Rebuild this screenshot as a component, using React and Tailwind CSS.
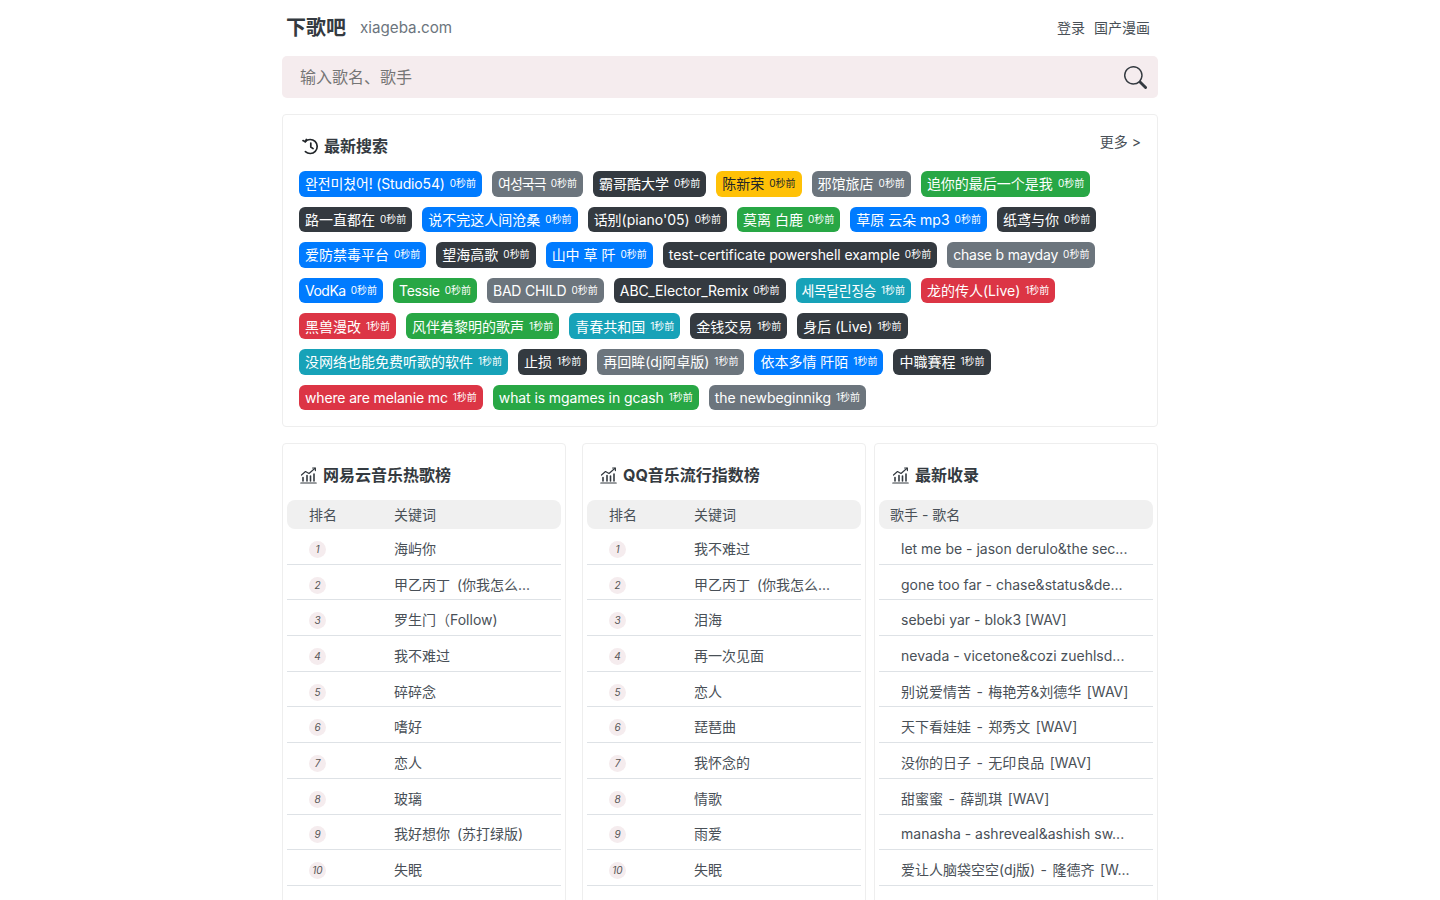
import React from "react";
import { BsSearch } from "react-icons/bs";

const colors = {
  blue: "bg-[#007bff] text-white",
  gray: "bg-[#6c757d] text-white",
  dark: "bg-[#343a40] text-white",
  yellow: "bg-[#ffc107] text-[#212529]",
  green: "bg-[#28a745] text-white",
  cyan: "bg-[#17a2b8] text-white",
  red: "bg-[#dc3545] text-white",
};

// label, colour, seconds, optional tracking tweak so widths line up
const tags = [
  ["완전미쳤어! (Studio54)", "blue", 0, "tracking-[-0.15px]"],
  ["여성국극", "gray", 0, "tracking-[-1px]"],
  ["霸哥酷大学", "dark", 0],
  ["陈新荣", "yellow", 0],
  ["邪馆旅店", "gray", 0],
  ["追你的最后一个是我", "green", 0],
  ["路一直都在", "dark", 0],
  ["说不完这人间沧桑", "blue", 0],
  ["话别(piano'05)", "dark", 0],
  ["莫离 白鹿", "green", 0],
  ["草原 云朵 mp3", "blue", 0],
  ["纸鸢与你", "dark", 0],
  ["爱防禁毒平台", "blue", 0],
  ["望海高歌", "dark", 0],
  ["山中 草 阡", "blue", 0],
  ["test-certificate powershell example", "dark", 0, "tracking-[-0.06px]"],
  ["chase b mayday", "gray", 0, "tracking-[-0.2px]"],
  ["VodKa", "blue", 0, "tracking-[-0.5px]"],
  ["Tessie", "green", 0, "tracking-[-0.3px]"],
  ["BAD CHILD", "gray", 0, "tracking-[-0.2px]"],
  ["ABC_Elector_Remix", "dark", 0],
  ["세목달린징승", "cyan", 1, "tracking-[-0.5px]"],
  ["龙的传人(Live)", "red", 1],
  ["黑兽漫改", "red", 1],
  ["风伴着黎明的歌声", "green", 1],
  ["青春共和国", "cyan", 1],
  ["金钱交易", "dark", 1],
  ["身后 (Live)", "dark", 1],
  ["没网络也能免费听歌的软件", "cyan", 1],
  ["止损", "dark", 1],
  ["再回眸(dj阿卓版)", "gray", 1],
  ["依本多情 阡陌", "blue", 1],
  ["中職賽程", "dark", 1],
  ["where are melanie mc", "red", 1, "tracking-[-0.15px]"],
  ["what is mgames in gcash", "green", 1, "tracking-[-0.1px]"],
  ["the newbeginnikg", "gray", 1, "tracking-[-0.06px]"],
];

const netease = ["海屿你", "甲乙丙丁 (你我怎么...", "罗生门（Follow)", "我不难过", "碎碎念", "嗜好", "恋人", "玻璃", "我好想你 (苏打绿版)", "失眠"];
const qq = ["我不难过", "甲乙丙丁 (你我怎么...", "泪海", "再一次见面", "恋人", "琵琶曲", "我怀念的", "情歌", "雨爱", "失眠"];
const latest = [
  "let me be - jason derulo&the sec...",
  "gone too far - chase&status&de...",
  "sebebi yar - blok3 [WAV]",
  "nevada - vicetone&cozi zuehlsd...",
  "别说爱情苦 - 梅艳芳&刘德华 [WAV]",
  "天下看娃娃 - 郑秀文 [WAV]",
  "没你的日子 - 无印良品 [WAV]",
  "甜蜜蜜 - 薛凯琪 [WAV]",
  "manasha - ashreveal&ashish sw...",
  "爱让人脑袋空空(dj版) - 隆德齐 [W...",
];

function HistoryIcon() {
  return (
    <svg width="17" height="17" viewBox="0 0 17 17" fill="none" stroke="#212529" strokeWidth="1.7" strokeLinecap="round" strokeLinejoin="round">
      <path d="M3.2 3.6A7 7 0 1 1 3.4 13.6" />
      <path d="M1 2.6l2.3 1.2 1-2.3" />
      <path d="M8.8 5v4l2.3 1.6" />
    </svg>
  );
}

function ChartIcon() {
  return (
    <svg width="17" height="17" viewBox="0 0 17 17" fill="none" stroke="#343a40" strokeWidth="1.2" strokeLinecap="round" strokeLinejoin="round">
      <path d="M0.8 16h15.4" />
      <path d="M3 14V10.5M7 14V8.5M10.5 14V9M14 14V7" strokeWidth="1.6" />
      <path d="M1.5 8 5.5 4.5 9 6.5 15 1.2" />
      <path d="M12.6 1h2.8v2.6" />
    </svg>
  );
}

function RankBadge({ n }) {
  return (
    <span className="flex h-[17px] w-[17px] items-center justify-center rounded-full bg-[#f5ecee] text-[10px] italic text-[#555]">
      {n}
    </span>
  );
}

function ChartCard({ title, rows, ranked, className }) {
  return (
    <div className={`rounded border border-[#eeeeee] bg-white px-1 pb-10 pt-[18px] ${className}`}>
      <div className="flex h-[26px] items-center gap-[6px] px-[13px] text-[16px] font-bold text-[#343a40]">
        <ChartIcon />
        {title}
      </div>
      <div className={`mt-[12px] flex h-[29px] items-center rounded-lg bg-[#f0f0f0] text-[14px] text-[#495057] ${ranked ? "px-[22px]" : "px-[11px]"}`}>
        {ranked ? (
          <>
            <span className="w-[85px]">排名</span>
            <span>关键词</span>
          </>
        ) : (
          "歌手 - 歌名"
        )}
      </div>
      {rows.map((row, i) => (
        <div key={i} className="flex h-[35.7px] items-center border-b border-[#dee2e6] px-[22px] pt-[4px] text-[14px] text-[#495057]">
          {ranked && (
            <span className="w-[85px] pt-[2px]">
              <RankBadge n={i + 1} />
            </span>
          )}
          <span className={`whitespace-nowrap ${ranked ? "[word-spacing:3px]" : /[\u4e00-\u9fff]/.test(row) ? "[word-spacing:1.5px]" : ""}`}>{row}</span>
        </div>
      ))}
    </div>
  );
}

export default function App() {
  return (
    <div className="mx-auto h-[900px] w-[876px] overflow-hidden bg-white font-['Inter','Noto_Sans_CJK_SC',sans-serif]">
      <header className="flex h-[56px] items-center justify-between pl-1 pr-2">
        <div className="flex items-center gap-[14px]">
          <span className="text-[20px] font-bold text-[#343a40]">下歌吧</span>
          <span className="text-[15.2px] text-[#6c757d]">xiageba.com</span>
        </div>
        <div className="-mt-px flex gap-[9px] text-[14px] text-[#495057]">
          <span>登录</span>
          <span>国产漫画</span>
        </div>
      </header>

      <div className="flex h-[42px] items-center justify-between rounded-[5px] bg-[#f5ecee] pl-[18px] pr-[11px]">
        <span className="text-[16px] text-[#757575]">输入歌名、歌手</span>
        <BsSearch size={23} className="text-[#343a40]" />
      </div>

      <section className="relative mt-4 h-[313px] rounded border border-[#eeeeee] bg-white pl-4 pr-[45px] pt-[19px]">
        <div className="flex h-[24px] items-center gap-[5px] px-[3px] text-[16px] font-bold text-[#343a40]">
          <HistoryIcon />
          最新搜索
        </div>
        <span className="absolute right-4 top-4 text-[14px] text-[#495057]">更多 &gt;</span>
        <div className="mt-[13px] flex flex-wrap gap-x-[10px] gap-y-[10px]">
          {tags.map(([label, color, sec, tweak], i) => (
            <span key={i} className={`flex h-[25.6px] items-center gap-[5px] whitespace-nowrap rounded-md px-[6px] text-[14px] ${colors[color]}`}>
              <span className={tweak}>{label}</span>
              <span className="text-[10px]">{sec}秒前</span>
            </span>
          ))}
        </div>
      </section>

      <div className="mt-4 flex">
        <ChartCard title="网易云音乐热歌榜" rows={netease} ranked className="w-[284px]" />
        <ChartCard title="QQ音乐流行指数榜" rows={qq} ranked className="ml-4 w-[284px]" />
        <ChartCard title="最新收录" rows={latest} className="ml-2 w-[284px]" />
      </div>
    </div>
  );
}
